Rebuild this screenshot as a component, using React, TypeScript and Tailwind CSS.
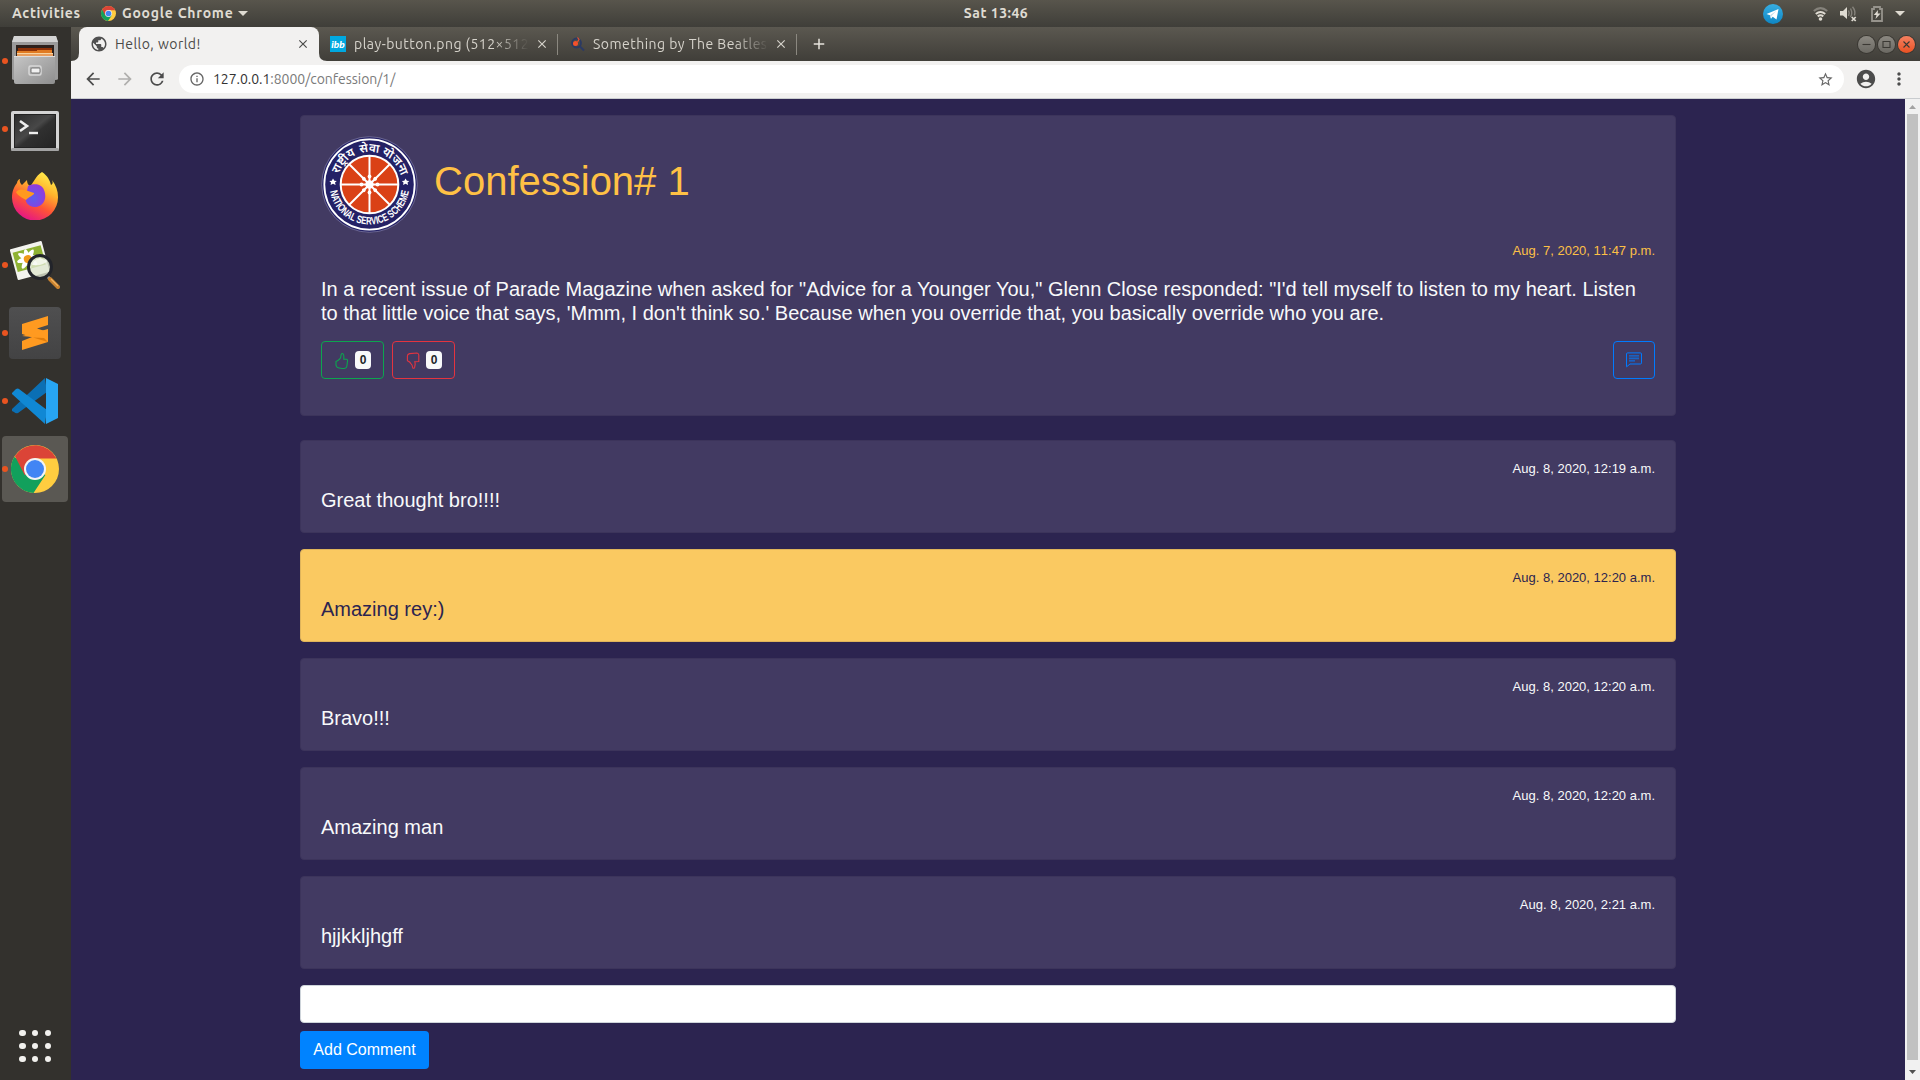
import React from "react";
import {
  MdAccountCircle,
  MdAdd,
  MdArrowBack,
  MdArrowForward,
  MdClose,
  MdInfoOutline,
  MdMoreVert,
  MdPublic,
  MdRefresh,
  MdStarBorder,
} from "react-icons/md";

const UI = "font-['Ubuntu','Noto_Sans',sans-serif]";

function ChromeLogo({ size }: { size: number }) {
  return (
    <svg width={size} height={size} viewBox="0 0 48 48">
      <circle cx="24" cy="24" r="24" fill="#ffcd40" />
      <path d="M24 24 L3.2 12 A24 24 0 0 0 22.5 48 L34.4 30 Z" fill="#12a05c" />
      <path d="M24 24 L13.6 30 L3.9 11 A24 24 0 0 1 45.5 13.5 H24 Z" fill="#db4437" />
      <circle cx="24" cy="24" r="11" fill="#f4f4f4" />
      <circle cx="24" cy="24" r="9" fill="#4285f4" />
    </svg>
  );
}

function FilesIcon() {
  return (
    <svg width="48" height="50" viewBox="0 0 48 50">
      <defs>
        <linearGradient id="cab" x1="0" y1="0" x2="1" y2="1">
          <stop offset="0" stopColor="#c6c6c6" />
          <stop offset="1" stopColor="#8e8e8e" />
        </linearGradient>
      </defs>
      <path d="M3 0 H45 L47 6 V43 Q47 44 44 44 H4 Q1 44 1 43 V6 Z" fill="#9b9b9b" />
      <path d="M3 0 H45 L47 6 H1 Z" fill="#d3d3d3" />
      <rect x="5" y="9" width="38" height="14" fill="#2d211c" />
      <path d="M7 12 H41 V21 H7 Z" fill="#8e3208" />
      <path d="M6 15 H26 V14 H41 V18 H6 Z" fill="#e07a22" />
      <path d="M6 17 H42 V20 H6 Z" fill="#f8d3a0" />
      <path d="M6 19 H42" stroke="#d96a1c" />
      <path d="M3 20 H44 V46 Q44 48 42 48 H5 Q3 48 3 46 Z" fill="url(#cab)" />
      <path d="M3 20.5 H44" stroke="#dedede" />
      <rect x="18" y="30" width="12" height="9" rx="1.5" fill="none" stroke="#d8d8d8" strokeWidth="1.5" />
      <rect x="20" y="32" width="9" height="5" rx="1" fill="#f0f0f0" stroke="#777" />
    </svg>
  );
}

function TerminalIcon() {
  return (
    <svg width="48" height="41" viewBox="0 0 48 41" className="mt-1">
      <defs>
        <linearGradient id="trm" x1="0" y1="0" x2="1" y2="1">
          <stop offset="0" stopColor="#2c2c2c" />
          <stop offset=".45" stopColor="#484848" />
          <stop offset=".55" stopColor="#303030" />
          <stop offset="1" stopColor="#242424" />
        </linearGradient>
      </defs>
      <rect x="0" y="0" width="48" height="40" rx="2" fill="#d4d4d4" />
      <rect x="0" y="37" width="48" height="3" rx="1.5" fill="#a3a3a3" />
      <rect x="3.5" y="3.5" width="41" height="33" fill="url(#trm)" stroke="#222" />
      <path d="M9 10 L16 15 L9 20" fill="none" stroke="#eee" strokeWidth="2.6" />
      <path d="M18 22 H27" stroke="#eee" strokeWidth="2.4" />
    </svg>
  );
}

function FirefoxIcon() {
  return (
    <svg width="48" height="48" viewBox="0 0 48 48" className="mb-0.5">
      <defs>
        <linearGradient id="fx1" x1=".8" y1="0" x2=".3" y2="1">
          <stop offset="0" stopColor="#fff44f" />
          <stop offset=".35" stopColor="#ffb32c" />
          <stop offset=".65" stopColor="#ff5535" />
          <stop offset="1" stopColor="#e3128a" />
        </linearGradient>
        <radialGradient id="fx2" cx=".4" cy=".6" r=".7">
          <stop offset="0" stopColor="#5a5ff0" />
          <stop offset="1" stopColor="#9b35d8" />
        </radialGradient>
      </defs>
      <path
        d="M31 0 C37 4 39 9 40 13 C42 12 42 10 41 8 C45 13 47 19 47 25 A23 23 0 0 1 1 26 C1 19 3 15 6 11 C6 9 8 7 9 7 C8 10 10 12 11 13 L16 8 C16 11 17 13 19 14 C23 11 24 4 31 0 Z"
        fill="url(#fx1)"
      />
      <path d="M17 14 C23 11 31 12 33 18 C37 28 31 35 24 35 C17 35 13 29 15 24 Z" fill="url(#fx2)" />
      <path d="M5 20 C9 16 14 18 17 19 L23 21 C24 23 17 25 15 28 C12 26 7 24 5 20 Z" fill="#ff9a1f" />
    </svg>
  );
}

function ViewerIcon() {
  return (
    <svg width="50" height="50" viewBox="0 0 50 50">
      <g transform="rotate(-15 18 20)">
        <rect x="3" y="5" width="33" height="32" rx="1" fill="#f3f3ee" />
        <rect x="5" y="9" width="29" height="20" fill="#8fb233" />
        <g fill="#fff">
          <ellipse cx="18" cy="19" rx="11" ry="3" />
          <ellipse cx="18" cy="19" rx="11" ry="3" transform="rotate(45 18 19)" />
          <ellipse cx="18" cy="19" rx="10" ry="3" transform="rotate(90 18 19)" />
          <ellipse cx="18" cy="19" rx="11" ry="3" transform="rotate(135 18 19)" />
        </g>
        <circle cx="18" cy="19" r="4" fill="#f09a1a" />
      </g>
      <circle cx="30" cy="27" r="11.5" fill="#dfe6cf" fillOpacity=".8" stroke="#22242a" strokeWidth="3" />
      <path d="M22 25 Q24 19 30 18 L37 21 Q34 26 22 25" fill="#fff" fillOpacity=".7" />
      <path d="M38 37 L41 40" stroke="#999" strokeWidth="3" />
      <path d="M40 39 L48 47" stroke="#c9822f" strokeWidth="4" strokeLinecap="round" />
      <path d="M41 39 L48 46" stroke="#efb15e" strokeWidth="1.3" />
    </svg>
  );
}

function SublimeIcon() {
  return (
    <div className="flex h-[52px] w-[52px] items-center justify-center rounded bg-linear-to-b from-[#4f4f50] to-[#434344]">
      <svg width="26" height="34" viewBox="0 0 26 34">
        <path d="M0 20 L26 13 V26 L0 34 V25 L10 21 Z" fill="#ff9a20" />
        <path d="M0 8 L26 0 V9 L15 12.5 L26 16 V26 L0 18 Z" fill="#ff9a20" />
        <path d="M11 21.5 L26 26 L22 22 Z" fill="#df7c0c" />
      </svg>
    </div>
  );
}

function CodeIcon() {
  return (
    <svg width="48" height="48" viewBox="0 0 48 48">
      <path d="M1 32 L34 1 L36 15 L7 36 Q5 37 3 35 L1 34 Z" fill="#0b6fb4" />
      <path d="M1 16 L5 12 Q7 11 8 12 L36 33 L34 47 L1 17 Z" fill="#1088d4" />
      <path d="M35 1 V47 L47 41 V7 Z" fill="#27a5f3" />
    </svg>
  );
}

function DockItem({ running = true, active = false, children }: { running?: boolean; active?: boolean; children: React.ReactNode }) {
  return (
    <div className="relative flex h-[68px] w-[71px] items-center justify-center pr-px">
      {active && <div className="absolute top-px left-0.5 h-[66px] w-[66px] rounded bg-[#5a5853]" />}
      {running && <div className="absolute top-[31px] left-0.5 h-1.5 w-1.5 rounded-full bg-[#e95420]" />}
      <div className="relative">{children}</div>
    </div>
  );
}

function Dock() {
  return (
    <aside className="flex w-[71px] shrink-0 flex-col justify-between bg-[#33312d]">
      <div>
        <DockItem><FilesIcon /></DockItem>
        <DockItem><TerminalIcon /></DockItem>
        <DockItem running={false}><FirefoxIcon /></DockItem>
        <DockItem><ViewerIcon /></DockItem>
        <DockItem><SublimeIcon /></DockItem>
        <DockItem><CodeIcon /></DockItem>
        <DockItem active><ChromeLogo size={48} /></DockItem>
      </div>
      <div className="mb-[18px] ml-[19px] grid w-[32px] grid-cols-3 gap-[6.5px]">
        {Array.from({ length: 9 }, (_, i) => (
          <div key={i} className="h-[6.5px] w-[6.5px] rounded-full bg-[#f2f1ee]" />
        ))}
      </div>
    </aside>
  );
}

function TopBar() {
  return (
    <header className={`${UI} grid h-[27px] shrink-0 grid-cols-[1fr_auto_1fr] items-center bg-linear-to-b from-[#58554c] to-[#3f3e39] text-[14px] font-semibold text-[#dfdbd2]`}>
      <div className="flex items-center">
        <span className="ml-3 w-[68px] tracking-[0.65px] whitespace-nowrap">Activities</span>
        <span className="ml-[21px]"><ChromeLogo size={15} /></span>
        <span className="ml-1.5 w-[111px] tracking-[0.75px] whitespace-nowrap">Google Chrome</span>
        <svg width="10" height="5" viewBox="0 0 10 5" className="ml-[5px]"><path d="M0 0H10L5 5Z" fill="#dfdbd2" /></svg>
      </div>
      <span className="relative left-[36px] tracking-[0.5px]">Sat 13:46</span>
      <div className="flex items-center justify-end">
        <svg width="20" height="20" viewBox="0 0 20 20" className="mr-[30px]">
          <defs><linearGradient id="tg" x1="0" y1="0" x2="0" y2="1"><stop stopColor="#37aee2" /><stop offset="1" stopColor="#0e86c4" /></linearGradient></defs>
          <circle cx="10" cy="10" r="10" fill="url(#tg)" />
          <path d="M3.5 10 L15.5 5 L13.5 15.5 L9.7 12.8 L8 14.7 L7 11.2 Z" fill="#fff" />
          <path d="M7 11.2 L13.5 6.8 L8.4 12 L8 14.7Z" fill="#c3dceb" />
        </svg>
        <svg width="15" height="14" viewBox="0 0 15 14" className="mr-3" fill="none" strokeWidth="2">
          <path d="M.8 4 Q7.5 -1.8 14.2 4" stroke="#85827b" />
          <path d="M2.8 7 Q7.5 3 12.2 7" stroke="#dfdbd2" />
          <path d="M4.7 9.4 Q7.5 7.2 10.3 9.4" stroke="#dfdbd2" />
          <circle cx="7.5" cy="12" r="1.8" fill="#dfdbd2" />
        </svg>
        <svg width="17" height="16" viewBox="0 0 17 16" className="mr-[14px]" fill="none">
          <path d="M0 5 H3 L7 1 V13 L3 9.5 H0 Z" fill="#dfdbd2" />
          <path d="M8.5 4.5 Q10 7 8.5 10 M10.5 2.5 Q13 7 10.5 11 M12.5 .7 Q16 5 14.5 9.5" stroke="#85827b" strokeWidth="1.4" />
          <path d="M11.7 11 L15.7 15 M15.7 11 L11.7 15" stroke="#dfdbd2" strokeWidth="1.7" />
        </svg>
        <svg width="12" height="16" viewBox="0 0 12 16" className="mr-[12px]">
          <path d="M1 3 H3 V1 H9 V3 H11 V15 H1 Z" fill="none" stroke="#96938c" strokeWidth="1.8" />
          <path d="M7 4 L2.8 9 H5.5 L4.5 13 L9.5 7.6 H6.7 Z" fill="#dfdbd2" />
        </svg>
        <svg width="10" height="5" viewBox="0 0 10 5" className="mr-[15px]"><path d="M0 0H10L5 5Z" fill="#dfdbd2" /></svg>
      </div>
    </header>
  );
}

function WindowButton({ close = false, children }: { close?: boolean; children: React.ReactNode }) {
  const tone = close ? "from-[#f5805f] to-[#e9501f]" : "from-[#8b8881] to-[#6b6963]";
  return (
    <div className={`h-[17px] w-[17px] rounded-full bg-linear-to-b ring-1 ring-[#3a3833] ${tone}`}>
      <svg width="17" height="17" viewBox="0 0 17 17" fill="none" stroke="#3b3934" strokeWidth="1.1">{children}</svg>
    </div>
  );
}

function TabStrip() {
  return (
    <div className={`${UI} flex h-[34px] shrink-0 bg-linear-to-b from-[#5b5850] to-[#403e39] text-[14px] tracking-[0.47px] text-[#d6d3cb]`}>
      <svg width="8" height="34" viewBox="0 0 8 34"><path d="M8 26 Q8 34 0 34 H8Z" fill="#f2f1f0" /></svg>
      <div className="flex w-[240px] items-center rounded-t-lg bg-[#f2f1f0] text-[#4a4a48]">
        <MdPublic className="ml-[11px] h-[18px] w-[18px] text-[#505050]" />
        <span className="ml-[7px] flex-1 whitespace-nowrap">Hello, world!</span>
        <MdClose className="mr-[9px] h-[14px] w-[14px] text-[#4a4a48]" />
      </div>
      <svg width="8" height="34" viewBox="0 0 8 34"><path d="M0 26 Q0 34 8 34 H0Z" fill="#f2f1f0" /></svg>
      <div className="flex w-[230px] items-center">
        <span className="ml-[3px] flex h-4 w-4 shrink-0 items-center justify-center bg-[#00a8e0] font-['Lato',sans-serif] text-[10px] font-black tracking-normal text-white italic">ibb</span>
        <span className="ml-2 w-[175px] overflow-hidden mask-r-from-80% mask-r-to-100% whitespace-nowrap">play-button.png (512×512)</span>
        <MdClose className="ml-[6px] h-[14px] w-[14px] shrink-0" />
      </div>
      <div className="mt-[7px] h-[21px] w-px bg-[#8b8880]" />
      <div className="flex w-[238px] items-center">
        <svg width="16" height="16" viewBox="0 0 16 16" className="ml-[12px] shrink-0">
          <circle cx="6.5" cy="7" r="4.5" fill="none" stroke="#2b3a63" strokeWidth="1.8" />
          <path d="M9.5 10 L14 14.5" stroke="#2b3a63" strokeWidth="2" />
          <circle cx="5.5" cy="7.5" r="2.5" fill="#f4512c" />
          <path d="M7.5 6 L9 3.5 L7.5 1.5" fill="none" stroke="#f4512c" strokeWidth="1.2" />
        </svg>
        <span className="ml-[7px] w-[176px] overflow-hidden mask-r-from-80% mask-r-to-100% whitespace-nowrap">Something by The Beatles</span>
        <MdClose className="ml-[5px] h-[14px] w-[14px] shrink-0" />
      </div>
      <div className="mt-[7px] h-[21px] w-px bg-[#8b8880]" />
      <MdAdd className="mt-2 ml-[13px] h-[18px] w-[18px] text-[#e6e3dc]" />
      <div className="flex-1" />
      <div className="mr-[5px] flex items-center gap-[3px]">
        <WindowButton><path d="M4.5 8.5H12.5" /></WindowButton>
        <WindowButton><path d="M5 5.5H12V11.5H5Z" /></WindowButton>
        <WindowButton close><path d="M5.5 5.5L11.5 11.5M11.5 5.5L5.5 11.5" /></WindowButton>
      </div>
    </div>
  );
}

function Toolbar() {
  return (
    <div className={`${UI} flex h-[38px] shrink-0 items-center border-b border-[#c9cccf] bg-[#f2f1f0] pb-[1px] text-[#4c4c4c]`}>
      <MdArrowBack className="ml-3 h-5 w-5" />
      <MdArrowForward className="ml-3 h-5 w-5 text-[#b0afad]" />
      <MdRefresh className="ml-3 h-5 w-5" />
      <div className="ml-3 flex h-7 w-[1665px] items-center rounded-full bg-white">
        <MdInfoOutline className="ml-[10px] h-4 w-4 text-[#666]" />
        <span className="ml-2 flex-1 text-[14px] tracking-[-0.04px] whitespace-nowrap text-[#7a7a7a]">
          <span className="text-[#333]">127.0.0.1</span>:8000/confession/1/
        </span>
        <MdStarBorder className="mr-[10px] h-[17px] w-[17px] text-[#666]" />
      </div>
      <MdAccountCircle className="ml-[11px] h-[22px] w-[22px]" />
      <MdMoreVert className="ml-[12px] h-5 w-5" />
    </div>
  );
}

const devanagari = {
  fontSize: 12,
  fontWeight: 600,
  textAnchor: "middle" as const,
  fontFamily: "'Noto Sans Devanagari','Noto Sans',sans-serif",
};

function Emblem() {
  return (
    <svg width="97" height="97" viewBox="0 0 97 97" className="shrink-0">
      <defs>
        <path id="arc-top" d="M16 48.5 A32.5 32.5 0 0 1 81 48.5" />
        <path id="arc-bottom" d="M8.5 48.5 A40 40 0 0 0 88.5 48.5" />
      </defs>
      <circle cx="48.5" cy="48.5" r="47.8" fill="#242166" stroke="#8480a4" strokeWidth=".7" />
      <circle cx="48.5" cy="48.5" r="45.2" fill="none" stroke="#fff" strokeWidth="1.8" />
      <circle cx="48.5" cy="48.5" r="28.8" fill="#da4116" stroke="#fff" strokeWidth="2" />
      <g stroke="#fff" strokeWidth="2">
        {[0, 45, 90, 135].map((a) => (
          <path key={a} d="M48.5 19.5V77.5" transform={`rotate(${a} 48.5 48.5)`} />
        ))}
      </g>
      <g fill="#fff">
        {[0, 45, 90, 135, 180, 225, 270, 315].map((a) => (
          <circle key={a} cx="48.5" cy="40.5" r="1.9" transform={`rotate(${a} 48.5 48.5)`} />
        ))}
        <circle cx="48.5" cy="48.5" r="4.2" />
        <path id="star" d="M12 42.6L13.4 44.8L15.8 45L14 46.6L14.6 49L12 47.7L9.6 49L10 46.6L8.3 45L10.8 44.8Z" />
        <use href="#star" x="72.5" />
        <text {...devanagari} transform="rotate(-48 48.5 48.5)">
          <textPath href="#arc-top" startOffset="50%">राष्ट्रीय</textPath>
        </text>
        <text {...devanagari}>
          <textPath href="#arc-top" startOffset="50%">सेवा</textPath>
        </text>
        <text {...devanagari} transform="rotate(48 48.5 48.5)">
          <textPath href="#arc-top" startOffset="50%">योजना</textPath>
        </text>
        <text fontSize="10.8" fontWeight="700" textAnchor="middle" fontFamily="'Liberation Sans Narrow','Liberation Sans',sans-serif">
          <textPath href="#arc-bottom" startOffset="50%" textLength="112" lengthAdjust="spacingAndGlyphs">NATIONAL SERVICE SCHEME</textPath>
        </text>
      </g>
    </svg>
  );
}

function VoteButton({ down = false }: { down?: boolean }) {
  const tone = down ? "border-[#e4343f] text-[#e4343f]" : "border-[#0ca54f] text-[#0ca54f]";
  return (
    <button className={`flex h-[38px] w-[63px] items-center rounded border pl-3 ${tone}`}>
      <svg width="16" height="18" viewBox="0 0 16 18" fill="none" stroke="currentColor" strokeWidth="1.1" className="mt-[1px]">
        {down ? (
          <path d="M4.5 1.6 L12 1 Q13.8 1.4 13.8 3 V9.5 L9.8 9.8 Q10.8 12 9.6 15.5 Q9 16.8 7.8 16 Q7.3 12.5 6 11.7 Q5 9.7 2.4 8.7 V4 Q2.5 2 4.5 1.6Z" />
        ) : (
          <path d="M8.6 1.5 Q7.2 1.3 7 3.5 Q7 6 5.5 7.2 Q4 8.8 2 9.5 V13 Q2.2 15.5 5 16 Q8 16.8 11 16.2 Q12.6 16 12.8 14.5 L13.6 8.7 Q13.6 7.3 12.5 7.2 L9.8 7.3 Q10.2 2 8.6 1.5Z" />
        )}
      </svg>
      <span className="ml-[5px] flex h-[18px] w-4 items-center justify-center rounded bg-[#f8f9fa] text-[12px] leading-none font-bold text-[#212529]">0</span>
    </button>
  );
}

const comments = [
  { date: "Aug. 8, 2020, 12:19 a.m.", text: "Great thought bro!!!!" },
  { date: "Aug. 8, 2020, 12:20 a.m.", text: "Amazing rey:)", highlight: true },
  { date: "Aug. 8, 2020, 12:20 a.m.", text: "Bravo!!!" },
  { date: "Aug. 8, 2020, 12:20 a.m.", text: "Amazing man" },
  { date: "Aug. 8, 2020, 2:21 a.m.", text: "hjjkkljhgff" },
];

function Page() {
  return (
    <main className="flex-1 bg-[#2c2450] font-['Liberation_Sans',Arial,sans-serif] text-[#f8f9fa]">
      <div className="mx-auto mt-4 w-[1376px]">
        <section className="h-[301px] rounded border border-[#3c345b] bg-[#423a62] p-5">
          <div className="flex h-[96px]">
            <Emblem />
            <h1 className="mt-[21px] ml-4 text-[40px] leading-[48px] text-[#ffc145]">Confession# 1</h1>
          </div>
          <p className="mt-[7px] mb-[14px] text-right text-[13px] leading-6 text-[#fdc046] [font-kerning:none]">Aug. 7, 2020, 11:47 p.m.</p>
          <p className="text-[20px] leading-6">
            In a recent issue of Parade Magazine when asked for "Advice for a Younger You," Glenn Close responded: "I'd tell myself to listen to my heart. Listen to that little voice that says, 'Mmm, I don't think so.' Because when you override that, you basically override who you are.
          </p>
          <div className="mt-4 flex gap-2">
            <VoteButton />
            <VoteButton down />
            <button className="ml-auto flex h-[38px] w-[42px] items-center justify-center rounded border border-[#007bff] text-[#007bff]">
              <svg width="16" height="16" viewBox="0 0 16 16" fill="none" stroke="currentColor">
                <path d="M.5 14.5V2Q.5 .9 1.6 .9H14.4Q15.5 .9 15.5 2V10.9Q15.5 12 14.4 12H4L.5 14.9Z" />
                <path d="M3 3.9H13M3 8.9H9" />
                <path d="M3 6.4H13" strokeWidth="1.8" opacity=".65" />
              </svg>
            </button>
          </div>
        </section>
        <div className="mt-6 flex flex-col gap-4">
          {comments.map((c, i) => (
            <article
              key={i}
              className={`h-[93px] rounded border px-5 pt-5 ${c.highlight ? "border-[#dfb45b] bg-[#fac961] text-[#2c2450]" : "border-[#3c345b] bg-[#423a62]"}`}
            >
              <p className="text-right text-[13px] leading-4 [font-kerning:none]">{c.date}</p>
              <p className="mt-[11px] text-[20px] leading-6">{c.text}</p>
            </article>
          ))}
        </div>
        <input className="mt-4 block h-[38px] w-full rounded border border-[#ced4da] bg-white px-3" />
        <button className="mt-2 block h-[38px] w-[129px] rounded bg-[#0083ff] text-[16px] text-white">Add Comment</button>
      </div>
    </main>
  );
}

function Scrollbar() {
  return (
    <div className="flex w-[15px] shrink-0 flex-col items-center bg-[#f1f1f1]">
      <svg width="15" height="15" viewBox="0 0 15 15"><path d="M4 10L7.5 6L11 10Z" fill="#a3a3a3" /></svg>
      <div className="w-[11px] flex-1 bg-[#c1c1c1]" />
      <svg width="15" height="20" viewBox="0 0 15 20"><path d="M4 10L7.5 14L11 10Z" fill="#505050" /></svg>
    </div>
  );
}

export default function App() {
  return (
    <div className="flex h-[1080px] w-[1920px] flex-col overflow-hidden">
      <TopBar />
      <div className="flex min-h-0 flex-1">
        <Dock />
        <div className="flex min-w-0 flex-1 flex-col">
          <TabStrip />
          <Toolbar />
          <div className="flex min-h-0 flex-1">
            <Page />
            <Scrollbar />
          </div>
        </div>
      </div>
    </div>
  );
}
